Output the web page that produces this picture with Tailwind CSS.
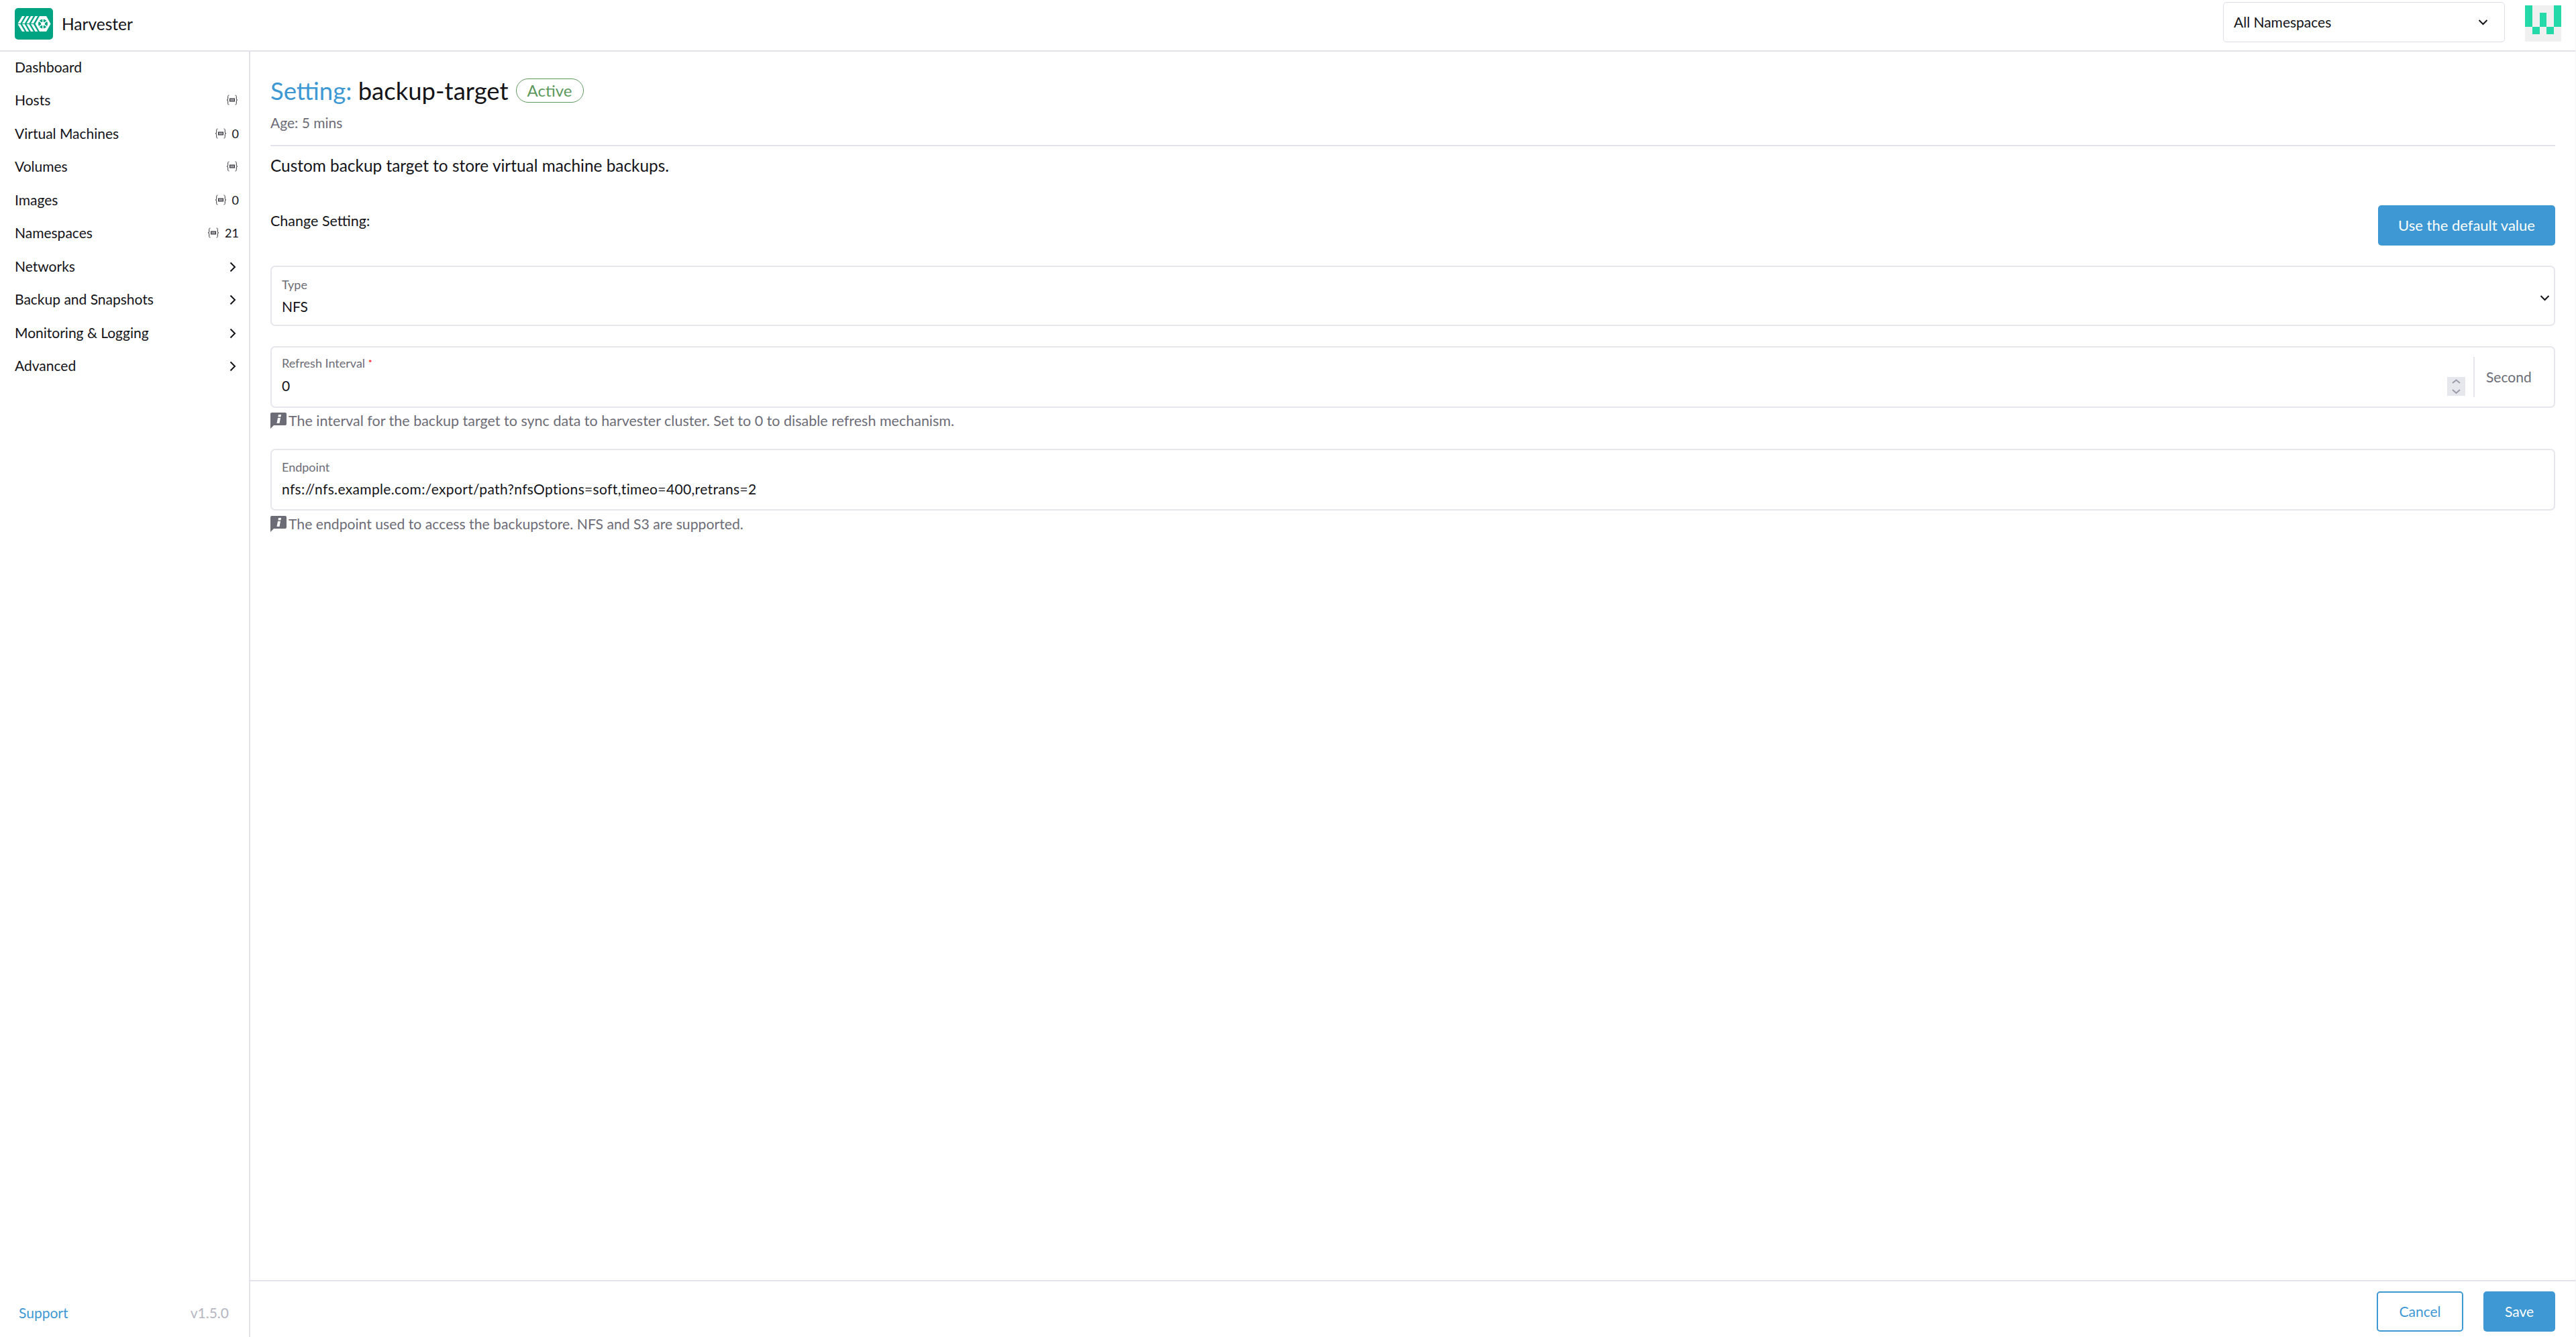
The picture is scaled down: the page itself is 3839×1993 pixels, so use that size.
<!DOCTYPE html>
<html lang="en">
<head>
  <meta charset="UTF-8" />
  <title>Harvester</title>
  <script src="https://cdn.jsdelivr.net/npm/@tailwindcss/browser@4"></script>
</head>
<body class="font-['Lato',sans-serif] text-[21px] leading-[30px] text-[#141419] bg-white">
<svg class="hidden">
  <symbol id="ns" viewBox="0 0 18 16">
    <path d="M4.500 1 C2.700 1 2.700 2 2.700 4 V6 C2.700 7.500 2.200 8 1 8 C2.200 8 2.700 8.500 2.700 10 V12 C2.700 14 2.700 15 4.500 15 M13.500 1 C15.300 1 15.300 2 15.300 4 V6 C15.300 7.500 15.800 8 17 8 C15.800 8 15.300 8.500 15.300 10 V12 C15.300 14 15.300 15 13.500 15" fill="none" stroke="#3a3a40" stroke-width="1"/>
    <rect x="5.500" y="6" width="7" height="4" fill="#a0a0a8" stroke="#2a2a30" stroke-width="1"/>
  </symbol>
  <symbol id="chev" viewBox="0 0 10 16"><path d="M1.500 1.500 L8 8 L1.500 14.500" fill="none" stroke="#141419" stroke-width="2"/></symbol>
  <symbol id="down" viewBox="0 0 15 10"><path d="M1.500 2 L7.500 8 L13.500 2" fill="none" stroke="#141419" stroke-width="2"/></symbol>
  <symbol id="info" viewBox="0 0 24 24"><path d="M2 0 H22 Q24 0 24 2 V17 Q24 19 22 19 H5 L0 24 V2 Q0 0 2 0Z" fill="#6c6c76"/><path d="M11 8 H15 L13.500 16 H9.500Z M12 3 H16 L15.400 6.500 H11.400Z" fill="#fff"/></symbol>
</svg>
<div class="h-[1993px] w-[3839px] flex flex-col overflow-hidden border-r border-[#f4f4f6]">

  <!-- Header -->
  <header class="h-[77px] shrink-0 border-b-2 border-[#e2e2ea] flex items-center pl-[22px] pr-[21px]">
    <svg class="w-[57px] h-[47px] mt-[-5px]" viewBox="0 0 57 47">
      <rect width="57" height="47" rx="5" fill="#00a483"/>
      <g fill="#fff">
        <path d="M4.500 23 L11 12 H14.800 L8.300 23Z M4.500 24 L11 35 H14.800 L8.300 24Z"/>
        <path d="M11 23 L17.500 12 H21.300 L14.800 23Z M11 24 L17.500 35 H21.300 L14.800 24Z"/>
        <path d="M17.500 23 L24 12 H27.800 L21.300 23Z M17.500 24 L24 35 H27.800 L21.300 24Z"/>
        <path d="M24 23 L30.500 12 H34.300 L27.800 23Z M24 24 L30.500 35 H34.300 L27.800 24Z"/>
        <path fill-rule="evenodd" d="M37 12 H47 L53.500 23.500 L47 35 H37 L30.500 23.500Z M42 16.500 A7 7 0 1 0 42 30.500 A7 7 0 1 0 42 16.500Z"/>
        <circle cx="42" cy="23.500" r="2.800"/>
        <path d="M41.300 16 h1.400 v15 h-1.400z M35.500 19.700 l0.700 -1.200 L48.500 27.300 l-0.700 1.200z M48.500 19.700 l-0.700 -1.200 L35.500 27.300 l0.700 1.200z"/>
      </g>
    </svg>
    <span class="ml-[13px] mt-[-4px] text-[24.5px] leading-[30px]">Harvester</span>
    <div class="ml-auto w-[420px] h-[60px] mt-[-9px] border border-[#dcdee7] rounded-[5px] flex items-center justify-between pl-[15px] pr-[24px]">
      <span>All Namespaces</span>
      <svg class="w-[15px] h-[10px]"><use href="#down"/></svg>
    </div>
    <svg class="w-[54px] h-[54px] ml-[30px] mt-[-6px]" viewBox="0 0 5 5" shape-rendering="crispEdges">
      <rect width="5" height="5" fill="#f0f0f0"/>
      <g fill="#26d9a8">
        <rect x="0" y="0" width="1" height="3"/>
        <rect x="4" y="0" width="1" height="3"/>
        <rect x="2" y="1" width="1" height="2"/>
        <rect x="1" y="3" width="1" height="1"/>
        <rect x="3" y="3" width="1" height="1"/>
      </g>
    </svg>
  </header>

  <div class="flex-1 flex min-h-0">
    <!-- Sidebar -->
    <aside class="w-[373px] shrink-0 border-r-2 border-[#e2e2ea] flex flex-col">
      <nav class="mt-[-2px]">
        <a class="h-[49.5px] flex items-center justify-between pl-[22px] pr-[16px]">Dashboard</a>
        <a class="h-[49.5px] flex items-center justify-between pl-[22px] pr-[16px]">Hosts
          <svg class="w-[18px] h-[16px]"><use href="#ns"/></svg>
        </a>
        <a class="h-[49.5px] flex items-center justify-between pl-[22px] pr-[15px]">Virtual Machines
          <span class="flex items-center gap-[8px] text-[18px]"><svg class="w-[18px] h-[16px]"><use href="#ns"/></svg>0</span>
        </a>
        <a class="h-[49.5px] flex items-center justify-between pl-[22px] pr-[16px]">Volumes
          <svg class="w-[18px] h-[16px]"><use href="#ns"/></svg>
        </a>
        <a class="h-[49.5px] flex items-center justify-between pl-[22px] pr-[15px]">Images
          <span class="flex items-center gap-[8px] text-[18px]"><svg class="w-[18px] h-[16px]"><use href="#ns"/></svg>0</span>
        </a>
        <a class="h-[49.5px] flex items-center justify-between pl-[22px] pr-[15px]">Namespaces
          <span class="flex items-center gap-[8px] text-[18px]"><svg class="w-[18px] h-[16px]"><use href="#ns"/></svg>21</span>
        </a>
        <a class="h-[49.5px] flex items-center justify-between pl-[22px] pr-[19px]">Networks
          <svg class="w-[10px] h-[16px] mt-[2px]"><use href="#chev"/></svg>
        </a>
        <a class="h-[49.5px] flex items-center justify-between pl-[22px] pr-[19px]">Backup and Snapshots
          <svg class="w-[10px] h-[16px] mt-[2px]"><use href="#chev"/></svg>
        </a>
        <a class="h-[49.5px] flex items-center justify-between pl-[22px] pr-[19px]">Monitoring &amp; Logging
          <svg class="w-[10px] h-[16px] mt-[2px]"><use href="#chev"/></svg>
        </a>
        <a class="h-[49.5px] flex items-center justify-between pl-[22px] pr-[19px]">Advanced
          <svg class="w-[10px] h-[16px] mt-[2px]"><use href="#chev"/></svg>
        </a>
      </nav>
      <div class="mt-auto h-[85px] pl-[28px] pr-[30px] pt-[12px] flex items-center justify-between">
        <a class="text-[#3d98d3]">Support</a>
        <span class="text-[#b6b6c2]">v1.5.0</span>
      </div>
    </aside>

    <!-- Main -->
    <main class="flex-1 min-w-0 flex flex-col">
      <div class="flex-1 pl-[30px] pr-[30px]">
        <div class="h-[141px] border-b-2 border-[#e2e2ea]">
          <div class="flex items-center pt-[36px]">
            <h1 class="text-[36.5px] leading-[44px]"><span class="text-[#3d98d3]">Setting:</span> backup-target</h1>
            <span class="ml-[11px] h-[36px] w-[101px] border border-[#5d995d] rounded-[18px] text-[#5d995d] text-[24px] leading-[34px] text-center">Active</span>
          </div>
          <div class="mt-[11px] leading-[30px] text-[#6c6c76]">Age: 5 mins</div>
        </div>
        <p class="mt-[14px] text-[24.4px] leading-[30px]">Custom backup target to store virtual machine backups.</p>
        <div class="mt-[44px] flex justify-between items-start">
          <span class="mt-[8px] text-[21.5px]">Change Setting:</span>
          <button class="w-[264px] h-[60px] bg-[#3d98d3] rounded-[5px] text-white text-[22px]">Use the default value</button>
        </div>

        <!-- Type -->
        <div class="mt-[30px] h-[90px] border-2 border-[#e6e6ed] rounded-[7px] pl-[15px] pr-[6px] relative flex flex-col">
          <label class="mt-[14px] text-[18px] leading-[24px] text-[#6c6c76]">Type</label>
          <span class="mt-[6px]">NFS</span>
          <svg class="absolute right-[6px] top-[41px] w-[15px] h-[10px]"><use href="#down"/></svg>
        </div>

        <!-- Refresh Interval -->
        <div class="mt-[30px] h-[92px] border-2 border-[#e6e6ed] rounded-[7px] flex">
          <div class="flex-1 pl-[15px] flex flex-col relative">
            <label class="mt-[11px] text-[18px] leading-[24px] text-[#6c6c76]">Refresh Interval <span class="text-[#f00] align-[2px] text-[14px]">*</span></label>
            <input class="mt-[7px] outline-none bg-transparent" value="0" />
            <div class="absolute right-[12px] top-[44px] w-[27px] h-[28px] bg-[#e6e6ed]">
              <svg class="w-[27px] h-[28px]" viewBox="0 0 27 28"><path d="M8 9 L13.500 4.500 L19 9 M8 19 L13.500 24 L19 19" fill="none" stroke="#9b9ba8" stroke-width="2"/></svg>
            </div>
          </div>
          <div class="w-[120px] my-[14px] border-l-2 border-[#e6e6ed] flex items-center pl-[17px] text-[#6c6c76]">Second</div>
        </div>
        <div class="mt-[4px] flex items-center text-[#6c6c76] h-[30px]">
          <svg class="w-[24px] h-[24px] shrink-0"><use href="#info"/></svg>
          <span class="ml-[3px] text-[21.5px]">The interval for the backup target to sync data to harvester cluster. Set to 0 to disable refresh mechanism.</span>
        </div>

        <!-- Endpoint -->
        <div class="mt-[27px] h-[92px] border-2 border-[#e6e6ed] rounded-[7px] pl-[15px] flex flex-col">
          <label class="mt-[13px] text-[18px] leading-[24px] text-[#6c6c76]">Endpoint</label>
          <input class="mt-[6px] outline-none bg-transparent tracking-[0.35px]" value="nfs://nfs.example.com:/export/path?nfsOptions=soft,timeo=400,retrans=2" />
        </div>
        <div class="mt-[5px] flex items-center text-[#6c6c76] h-[30px]">
          <svg class="w-[24px] h-[24px] shrink-0"><use href="#info"/></svg>
          <span class="ml-[3px] text-[21.2px]">The endpoint used to access the backupstore. NFS and S3 are supported.</span>
        </div>
      </div>

      <!-- Footer actions -->
      <div class="h-[85px] shrink-0 border-t-2 border-[#e2e2ea] flex justify-end gap-[30px] pt-[15px] pr-[30px]">
        <button class="w-[129px] h-[60px] border-2 border-[#3d98d3] rounded-[5px] text-[#3d98d3]">Cancel</button>
        <button class="w-[107px] h-[60px] bg-[#3d98d3] rounded-[5px] text-white">Save</button>
      </div>
    </main>
  </div>
</div>
</body>
</html>
